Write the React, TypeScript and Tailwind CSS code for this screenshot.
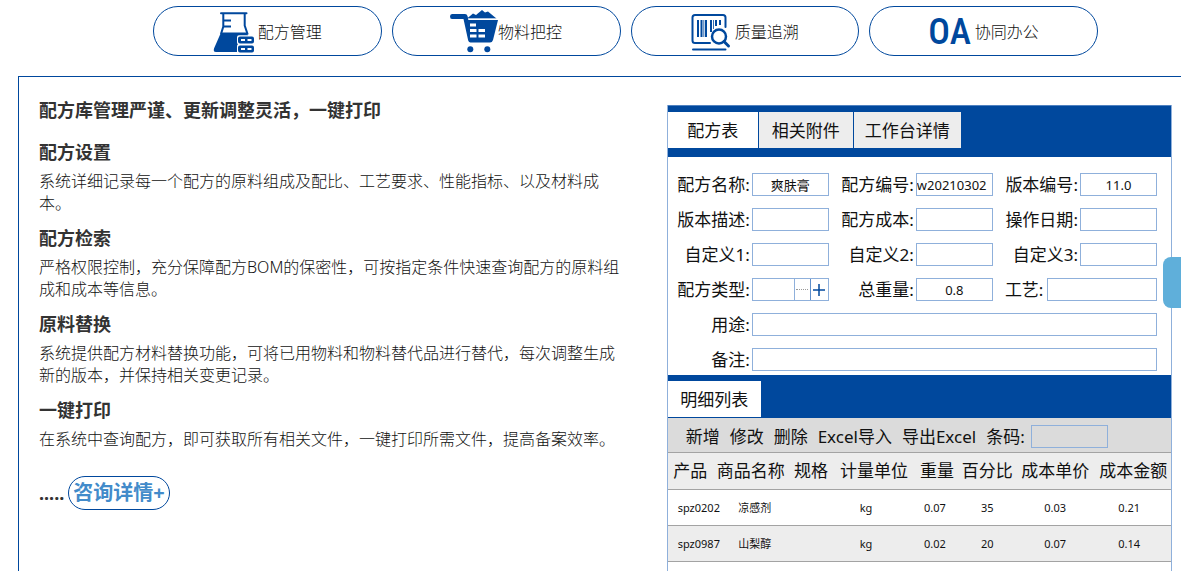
import type { ReactNode } from "react";

const BLUE = "#00489d";

function FlaskIcon() {
  return (
    <svg width="42" height="42" viewBox="0 0 42 42" fill="none" stroke={BLUE} aria-hidden="true">
      <path d="M8 2.300h25.500" strokeWidth="2" strokeLinecap="round" />
      <path d="M10.300 2.500v13L8 23M31.700 2.500v12l3 9" strokeWidth="2" />
      <path d="M10 9.500h8M10 15.500h8" strokeWidth="2" />
      <path d="M8 21.500H33.500L35 24.200H26q-2 0-2 2v5q0 1.500 1 2q-1 .500-1 2V41H3q-3 0-2-3.500z" fill={BLUE} stroke="none" />
      <path
        fillRule="evenodd"
        d="M27 25.500h12q2 0 2 2v3q0 2-2 2H27q-2 0-2-2v-3q0-2 2-2zm1 2.500v2h4V28zm6.500 0v2h4V28zM27 34.500h12q2 0 2 2v3q0 2-2 2H27q-2 0-2-2v-3q0-2 2-2zm1 2.500v2h4V37zm6.500 0v2h4V37z"
        fill={BLUE}
        stroke="none"
      />
    </svg>
  );
}

function CartIcon() {
  return (
    <svg width="48" height="44" viewBox="0 0 48 44" fill={BLUE} aria-hidden="true">
      <path d="M2 4h13q2 0 2.500 2l1 4H48q-.500 2-1 4l-4 16q-.800 2.500-3 2.500H20.500q-1.800 0-2.300-2L13.500 9H2Q0 9 0 6.500T2 4z" />
      <path d="M17 8.500l6-5 3 1.500 6-5 3 2.500 3-1 6 5 2.500 2z" />
      <path d="M18 9h28.500" stroke="#fff" strokeWidth="0.700" />
      <path
        d="M20 13.500h6v3h-6zM20 19h6.500v3H20zM28.500 19h6.500v3h-6.500zM20 24.500h6.500v3H20zM28.500 24.500h6.500v3h-6.500z"
        fill="#fff"
      />
      <circle cx="20.300" cy="39.300" r="3" />
      <circle cx="37.300" cy="39.300" r="3" />
    </svg>
  );
}

function BarcodeIcon() {
  return (
    <svg width="40" height="38" viewBox="0 0 40 38" fill="none" stroke={BLUE} aria-hidden="true">
      <path d="M19 30H4q-2.500 0-2.500-2.500V4.500Q1.500 2 4 2h28q2.500 0 2.500 2.500V14" strokeWidth="2" strokeLinecap="round" />
      <path d="M7 7v17M10.500 7v17M15 7v17" strokeWidth="2" />
      <path d="M20 7v12M25 7v6M29 7v5" strokeWidth="2" />
      <path d="M12.800 7v17M22.500 7v9" strokeWidth="0.800" />
      <circle cx="28" cy="23.500" r="7" strokeWidth="2.500" />
      <path d="M33 28.500l4.500 4.500" strokeWidth="3" strokeLinecap="round" />
      <path d="M2 36.500h32.500" strokeWidth="2" strokeLinecap="round" />
    </svg>
  );
}

function Pill({ icon, label }: { icon: ReactNode; label: string }) {
  return (
    <a
      href="#"
      className="flex h-[50px] items-center justify-center whitespace-nowrap rounded-full border border-[#00489d] pt-0.5 text-base font-light text-[#111]"
    >
      {icon}
      {label}
    </a>
  );
}

const sections = [
  { title: "配方设置", text: "系统详细记录每一个配方的原料组成及配比、工艺要求、性能指标、以及材料成本。" },
  { title: "配方检索", text: "严格权限控制，充分保障配方BOM的保密性，可按指定条件快速查询配方的原料组成和成本等信息。" },
  { title: "原料替换", text: "系统提供配方材料替换功能，可将已用物料和物料替代品进行替代，每次调整生成新的版本，并保持相关变更记录。" },
  { title: "一键打印", text: "在系统中查询配方，即可获取所有相关文件，一键打印所需文件，提高备案效率。" },
];

const labelClass = "whitespace-nowrap pr-0.5 text-right";
const boxClass = "h-[23px] w-full min-w-0 border border-[#8fb0db] bg-transparent text-[13px] leading-5 outline-none";

function Field({ id, label, value = "", align = "text-center" }: { id: string; label: string; value?: string; align?: string }) {
  return (
    <>
      <label htmlFor={id} className={labelClass}>
        {label}:
      </label>
      <input id={id} defaultValue={value} className={`${boxClass} ${align}`} />
    </>
  );
}

function WideField({ id, label }: { id: string; label: string }) {
  return (
    <>
      <label htmlFor={id} className={labelClass}>
        {label}:
      </label>
      <input id={id} className={`${boxClass} col-span-5`} />
    </>
  );
}

const columns = [
  { name: "产品", width: "w-[9%]", cell: "pl-2.5 text-left" },
  { name: "商品名称", width: "w-[15%]", cell: "pl-2" },
  { name: "规格", width: "w-[9%]", cell: "" },
  { name: "计量单位", width: "w-[16%]", cell: "pr-4" },
  { name: "重量", width: "w-[9%]", cell: "pr-1" },
  { name: "百分比", width: "w-[11%]", cell: "" },
  { name: "成本单价", width: "w-[16%]", cell: "" },
  { name: "成本金额", width: "w-[15%]", cell: "pr-2" },
];

const rows = [
  ["spz0202", "凉感剂", "", "kg", "0.07", "35", "0.03", "0.21"],
  ["spz0987", "山梨醇", "", "kg", "0.02", "20", "0.07", "0.14"],
];

const actions = ["新增", "修改", "删除", "Excel导入", "导出Excel"];

function RecipeForm() {
  return (
    <div className="w-full min-w-0 border-x border-[#8fb0db] text-[17px] leading-[23px] text-[#111]">
      <div className="flex h-[52px] border-t border-[#4f81c0] bg-[#00489d] pb-[9px] pt-1.5">
        <button type="button" className="w-[90px] bg-white">配方表</button>
        <button type="button" className="ml-px w-[94px] bg-[#ededed]">相关附件</button>
        <button type="button" className="ml-px w-[107px] bg-[#ededed]">工作台详情</button>
      </div>

      <form className="grid grid-cols-[84fr_77fr_87fr_77fr_87fr_77fr] items-center gap-y-3 pb-1 pr-3.5 pt-4">
        <Field id="name" label="配方名称" value="爽肤膏" />
        <Field id="code" label="配方编号" value="w20210302" align="text-left" />
        <Field id="version" label="版本编号" value="11.0" />
        <Field id="desc" label="版本描述" />
        <Field id="cost" label="配方成本" />
        <Field id="date" label="操作日期" />
        <Field id="custom1" label="自定义1" />
        <Field id="custom2" label="自定义2" />
        <Field id="custom3" label="自定义3" />
        <label htmlFor="type" className={labelClass}>配方类型:</label>
        <div className="flex h-[23px] border border-[#8fb0db]">
          <input id="type" className="w-full min-w-0 flex-1 outline-none" />
          <button type="button" className="flex w-4 items-center justify-center border-l border-[#8fb0db]">
            <span className="w-3 border-t border-dotted border-[#999]" />
          </button>
          <button type="button" className="flex w-[18px] items-center justify-center border-l border-[#5f8fcb]">
            <svg width="12" height="12" viewBox="0 0 12 12" stroke={BLUE} strokeWidth="1.500" aria-hidden="true">
              <path d="M6 0v12M0 6h12" />
            </svg>
          </button>
        </div>
        <Field id="weight" label="总重量" value="0.8" />
        <div className="col-span-2 flex items-center gap-0.5 pl-3">
          <label htmlFor="craft" className={labelClass}>工艺:</label>
          <input id="craft" className={`${boxClass} flex-1`} />
        </div>
        <WideField id="usage" label="用途" />
        <WideField id="remark" label="备注" />
      </form>

      <div className="flex h-[43px] bg-[#00489d] pb-px pt-1.5">
        <button type="button" className="w-[93px] bg-white">明细列表</button>
      </div>
      <div className="flex h-[35px] items-center gap-2.5 whitespace-nowrap border-b border-[#a3a3a3] bg-[#dbdbdb] pl-[18px] pt-0.5">
        {actions.map((a) => (
          <button key={a} type="button">{a}</button>
        ))}
        <div className="flex items-center gap-1.5">
          <label htmlFor="barcode">条码:</label>
          <input id="barcode" className="h-[23px] w-[77px] border border-[#8fb0db] outline-none" />
        </div>
      </div>
      <table className="w-full table-fixed border-collapse whitespace-nowrap text-center">
        <thead>
          <tr className="h-9 border-b border-[#a3a3a3] bg-[#ededed]">
            {columns.map((c) => (
              <th key={c.name} className={`${c.width} p-0 font-normal`}>{c.name}</th>
            ))}
          </tr>
        </thead>
        <tbody className="text-[11px]">
          {rows.map((row) => (
            <tr key={row[0]} className="h-9 border-b border-[#a3a3a3] bg-white even:bg-[#ededed]">
              {row.map((value, i) => (
                <td key={columns[i].name} className={columns[i].cell}>{value}</td>
              ))}
            </tr>
          ))}
          <tr className="h-9"><td colSpan={8} /></tr>
        </tbody>
      </table>
    </div>
  );
}

export default function App() {
  return (
    <div
      lang="zh-CN"
      className="flex h-screen flex-col overflow-hidden bg-white pl-[18px] font-['Noto_Sans','Noto_Sans_CJK_SC',sans-serif] text-[#333]"
    >
      <nav className="grid shrink-0 grid-cols-4 gap-2.5 pb-5 pl-[135px] pr-[83px] pt-1.5">
        <Pill icon={<span className="mr-[3px]"><FlaskIcon /></span>} label="配方管理" />
        <Pill icon={<CartIcon />} label="物料把控" />
        <Pill icon={<span className="mr-1"><BarcodeIcon /></span>} label="质量追溯" />
        <Pill
          icon={
            <span className="mr-1 font-['Liberation_Sans_Narrow','Roboto_Condensed',sans-serif] text-[36px] font-medium leading-none text-[#00489d]">
              OA
            </span>
          }
          label="协同办公"
        />
      </nav>

      <main className="flex min-h-0 flex-1 items-start border-l border-t border-[#00489d] pl-5 pr-[9px]">
        <section className="w-[55.4%] shrink-0 pr-10 pt-[23px]">
          <h2 className="mb-[22px] text-lg font-bold leading-5">配方库管理严谨、更新调整灵活，一键打印</h2>
          {sections.map((s) => (
            <div key={s.title} className="mb-3.5">
              <h3 className="mb-2 text-lg font-bold leading-5">{s.title}</h3>
              <p className="text-base font-light leading-[22px] text-[#111]">{s.text}</p>
            </div>
          ))}
          <div className="mt-[26px] flex items-center gap-1 text-lg font-bold">
            <span>.....</span>
            <a
              href="#"
              className="flex h-[34px] items-center rounded-full border border-[#00489d] px-1 text-xl text-[#428bca]"
            >
              咨询详情+
            </a>
          </div>
        </section>
        <div className="min-w-0 flex-1 pt-7">
          <RecipeForm />
        </div>
      </main>

      <div className="fixed right-0 top-[257px] h-[51px] w-[18px] rounded-l-lg bg-[#5fafda]" />
    </div>
  );
}
